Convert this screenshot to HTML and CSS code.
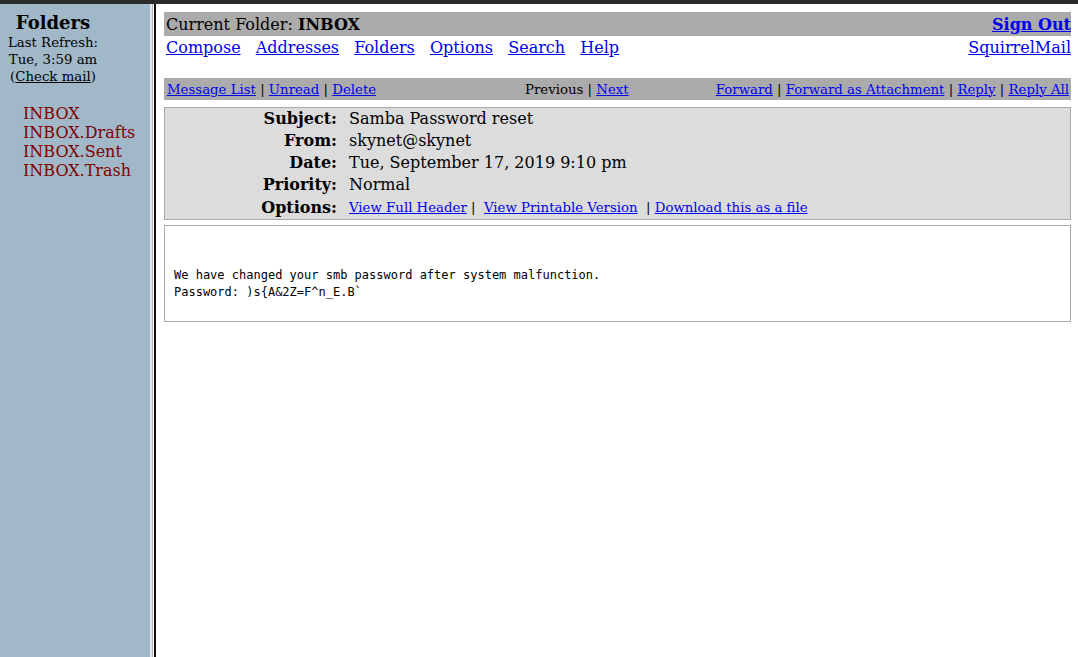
FILE: index.html
```html
<!DOCTYPE html>
<html>
<head>
<meta charset="utf-8">
<link rel="stylesheet" href="styles.css">
</head>
<body>
<div class="topbar"></div>
<div class="frames">
  <aside class="left">
    <div class="lhead">
      <div class="ftitle">Folders</div>
      <div class="refresh">Last Refresh:<br>Tue, 3:59 am<br>(<a class="check" href="#">Check mail</a>)</div>
    </div>
    <ul class="folders">
      <li>INBOX</li>
      <li>INBOX.Drafts</li>
      <li>INBOX.Sent</li>
      <li>INBOX.Trash</li>
    </ul>
  </aside>
  <div class="divider"><span class="d1"></span><span class="d2"></span><span class="d3"></span><span class="d4"></span></div>
  <main class="right">
    <div class="bar1">
      <span>Current Folder: <b>INBOX</b></span>
      <a class="signout" href="#">Sign Out</a>
    </div>
    <div class="nav">
      <div class="navlinks">
        <a href="#">Compose</a><a href="#">Addresses</a><a href="#">Folders</a><a href="#">Options</a><a href="#">Search</a><a href="#">Help</a>
      </div>
      <a href="#">SquirrelMail</a>
    </div>
    <div class="bar2">
      <div class="b2left"><a href="#">Message List</a> | <a href="#">Unread</a> | <a href="#">Delete</a></div>
      <div class="b2mid">Previous | <a href="#">Next</a></div>
      <div class="b2right"><a href="#">Forward</a> | <a href="#">Forward as Attachment</a> | <a href="#">Reply</a> | <a href="#">Reply All</a></div>
    </div>
    <div class="header">
      <div class="lbl">Subject:</div><div class="val">Samba Password reset</div>
      <div class="lbl">From:</div><div class="val">skynet@skynet</div>
      <div class="lbl">Date:</div><div class="val">Tue, September 17, 2019 9:10 pm</div>
      <div class="lbl">Priority:</div><div class="val">Normal</div>
      <div class="lbl last">Options:</div><div class="val opts"><a href="#">View Full Header</a>&nbsp;|&nbsp;&nbsp;<a href="#">View Printable Version</a>&nbsp;&nbsp;|&nbsp;<a href="#">Download this as a file</a></div>
    </div>
    <div class="body"><pre>We have changed your smb password after system malfunction.
Password: )s{A&amp;2Z=F^n_E.B`</pre></div>
  </main>
</div>
</body>
</html>
```
FILE: styles.css
```css
html, body { margin: 0; padding: 0; }
body {
  font-family: "DejaVu Serif", serif;
  font-size: 16px;
  color: #000;
  background: #fff;
  width: 1078px;
  height: 657px;
  overflow: hidden;
}
a { color: #0000ee; }
.topbar { height: 4px; background: #2b2b2b; }
.frames { display: flex; height: 653px; }
.left {
  width: 150px;
  background: #a0b8c8;
  box-sizing: border-box;
  padding-top: 9px;
}
.lhead { width: 106px; }
.ftitle {
  text-align: center;
  font-weight: bold;
  font-size: 18px;
  line-height: 20px;
}
.refresh {
  text-align: center;
  font-size: 13.3px;
  line-height: 17px;
  margin-top: 1px;
}
.check { color: #000; }
.folders {
  list-style: none;
  margin: 19px 0 0 23px;
  padding: 0;
  font-size: 16px;
  line-height: 19px;
  color: #800000;
}
.divider { display: flex; width: 6px; }
.divider span { display: block; height: 100%; }
.d1 { width: 2px; background: #e6e6e6; }
.d2 { width: 1px; background: #b8b8b8; }
.d3 { width: 1px; background: #ffffff; }
.d4 { width: 2px; background: #111; }
.right {
  flex: 1;
  padding: 8px 7px 8px 8px;
  box-sizing: border-box;
}
.bar1 {
  background: #ababab;
  height: 24px;
  display: flex;
  justify-content: space-between;
  align-items: center;
  padding: 0 0 0 2px;
  font-size: 16px;
}
.signout { font-weight: bold; font-size: 16px; }
.nav {
  display: flex;
  justify-content: space-between;
  padding: 0 0 0 2px;
  height: 22px;
  align-items: center;
}
.navlinks { display: flex; gap: 15.2px; }
.bar2 {
  margin-top: 20px;
  background: #ababab;
  height: 22px;
  display: grid;
  grid-template-columns: 358px auto 1fr;
  align-items: center;
  padding: 0 2px 0 3px;
  font-size: 13.3px;
}
.b2right { text-align: right; }
.header {
  margin-top: 7px;
  background: #dcdcdc;
  border: 1px solid #a9a9a9;
  display: grid;
  grid-template-columns: 172px 1fr;
  column-gap: 12px;
  padding: 0;
  line-height: 22px;
}
.lbl { font-weight: bold; text-align: right; }
.lbl.last { line-height: 23px; }
.opts { font-size: 13.3px; line-height: 23px; }
.body {
  margin-top: 5px;
  border: 1px solid #a9a9a9;
  height: 95px;
  padding: 0 9px;
}
.body pre {
  margin: 41px 0 0;
  font-family: "DejaVu Sans Mono", monospace;
  font-size: 12px;
  line-height: 17px;
}
```
